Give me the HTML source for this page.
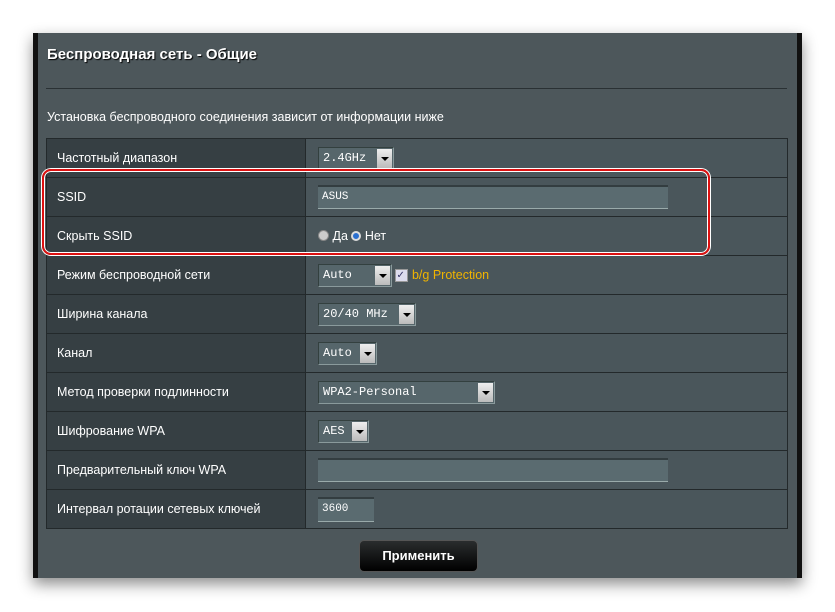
<!DOCTYPE html>
<html><head><meta charset="utf-8"><style>
body{margin:0;width:835px;height:612px;background:#fff;position:relative;overflow:hidden;font-family:"Liberation Sans",sans-serif}
.panel{position:absolute;left:33px;top:33px;width:769px;height:545px;background:#4d575b;box-shadow:0 6px 14px rgba(0,0,0,.45)}
.lb{position:absolute;left:0;top:0;width:5px;height:545px;background:#111}
.rb{position:absolute;right:0;top:0;width:5px;height:545px;background:#111}
.title{position:absolute;left:14px;top:13px;color:#fff;font-weight:bold;font-size:15px;text-shadow:1px 1px 1px #000}
.hr{position:absolute;left:13px;top:55px;width:741px;height:1px;background:#2a3134}
.sub{position:absolute;left:14px;top:77px;color:#fff;font-size:12.5px}
table{position:absolute;left:13px;top:105px;border-collapse:collapse;width:742px}
td{border:1px solid #23292b;height:38px;padding:0;font-size:12.5px;color:#fff}
td.l{width:248px;background:#363f43;padding-left:10px}
td.v{background:#4a565b;padding-left:12px}
.sel{display:inline-block;height:21px;background:#56666b;border:1px solid #33403f;border-right-color:#8a9a9c;border-bottom-color:#8a9a9c;font-family:"Liberation Mono",monospace;font-size:12px;line-height:21px;padding-left:4px;position:relative;vertical-align:middle;color:#fff}
.arr{position:absolute;right:1px;top:1px;width:15px;height:19px;background:linear-gradient(#eee,#bbb)}
.arr:after{content:"";position:absolute;left:4px;top:8px;border:4px solid transparent;border-top:4px solid #000}
.inp{display:inline-block;height:21px;background:#5a6b70;border-top:2px solid #333d40;border-bottom:1px solid #9aa;vertical-align:middle;font-family:"Liberation Mono",monospace;font-size:11px;line-height:21px;padding-left:4px;color:#fff}
.red{position:absolute;left:42px;top:169px;width:664px;height:82px;border:2px solid #d11;border-radius:9px;box-shadow:0 0 0 1px #fff,inset 0 0 0 1px #fff}
.btn{position:absolute;left:359px;top:540px;width:117px;height:30px;border-radius:5px;background:linear-gradient(#2a2d2e,#000);border:1px solid #555;color:#fff;font-weight:bold;font-size:13px;text-align:center;line-height:30px}
.rad{display:inline-block;width:9px;height:9px;border-radius:50%;background:#ccc;border:1px solid #888;vertical-align:-1px}
</style></head><body>
<div class="panel"><div class="lb"></div><div class="rb"></div>
<div class="title">Беспроводная сеть - Общие</div>
<div class="hr"></div>
<div class="sub">Установка беспроводного соединения зависит от информации ниже</div>
<table>
<tr><td class="l">Частотный диапазон</td><td class="v"><span class="sel" style="width:70px">2.4GHz<span class="arr"></span></span></td></tr>
<tr><td class="l">SSID</td><td class="v"><span class="inp" style="width:346px">ASUS</span></td></tr>
<tr><td class="l">Скрыть SSID</td><td class="v"><span class="rad"></span> Да <span class="rad" style="background:#2a6fd0;border:2px solid #ddd;width:6px;height:6px"></span> Нет</td></tr>
<tr><td class="l">Режим беспроводной сети</td><td class="v"><span class="sel" style="width:68px">Auto<span class="arr"></span></span> <span style="display:inline-block;width:11px;height:11px;background:#dde;border:1px solid #999;vertical-align:middle;color:#336;font-size:10px;line-height:11px">✓</span> <span style="color:#f0b400">b/g Protection</span></td></tr>
<tr><td class="l">Ширина канала</td><td class="v"><span class="sel" style="width:92px">20/40 MHz<span class="arr"></span></span></td></tr>
<tr><td class="l">Канал</td><td class="v"><span class="sel" style="width:53px">Auto<span class="arr"></span></span></td></tr>
<tr><td class="l">Метод проверки подлинности</td><td class="v"><span class="sel" style="width:171px">WPA2-Personal<span class="arr"></span></span></td></tr>
<tr><td class="l">Шифрование WPA</td><td class="v"><span class="sel" style="width:45px">AES<span class="arr"></span></span></td></tr>
<tr><td class="l">Предварительный ключ WPA</td><td class="v"><span class="inp" style="width:346px"></span></td></tr>
<tr><td class="l">Интервал ротации сетевых ключей</td><td class="v"><span class="inp" style="width:52px;height:22px">3600</span></td></tr>
</table>
</div>
<div class="red"></div>
<div class="btn">Применить</div>
</body></html>
